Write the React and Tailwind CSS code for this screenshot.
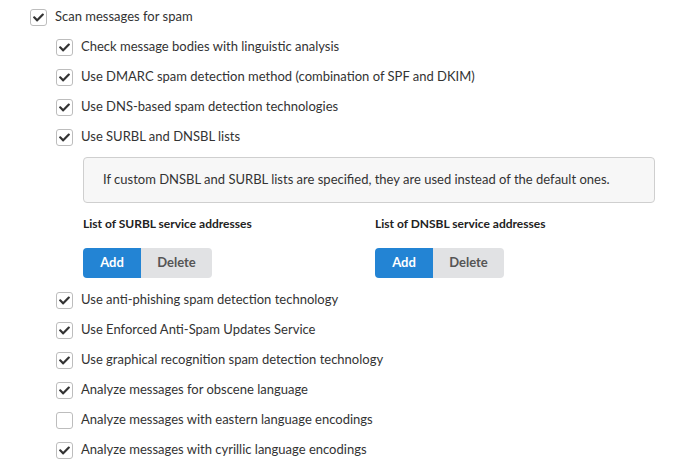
import React from 'react';

const Check = () => (
  <svg viewBox="0 0 512 512" className="w-[11px] h-[11px]" fill="#333">
    <path d="M173.9 439.4L7.5 273c-10-10-10-26.2 0-36.2l36.2-36.2c10-10 26.2-10 36.2 0L192 312.7 432.1 72.6c10-10 26.2-10 36.2 0l36.2 36.2c10 10 10 26.2 0 36.2L210.1 439.4c-10 10-26.2 10-36.2 0z" />
  </svg>
);

const Row = ({ checked = true, children }) => (
  <label className="flex items-center h-[30px] gap-[8px] text-[13px] text-[#333]">
    <span className="w-[17px] h-[17px] rounded-[3px] border border-[#bdbdbd] bg-white flex items-center justify-center shrink-0">
      {checked && <Check />}
    </span>
    <span>{children}</span>
  </label>
);

const ListBlock = ({ title }) => (
  <div className="w-[292px]">
    <div className="text-[12px] font-bold text-[#222] h-[20px] leading-[20px]">{title}</div>
    <div className="flex mt-[14px]">
      <button className="h-[30px] w-[58px] bg-[#2384d4] text-white font-bold text-[13px] rounded-l-[4px]">Add</button>
      <button className="h-[30px] w-[71px] bg-[#e1e2e4] text-[#555] font-bold text-[13px] rounded-r-[4px]">Delete</button>
    </div>
  </div>
);

export default function App() {
  return (
    <div className="bg-white w-[692px] h-[471px] overflow-hidden pl-[30px] pt-[2px]" style={{ fontFamily: 'Lato, "Liberation Sans", sans-serif' }}>
      <Row>Scan messages for spam</Row>
      <div className="pl-[26px]">
        <Row>Check message bodies with linguistic analysis</Row>
        <Row>Use DMARC spam detection method (combination of SPF and DKIM)</Row>
        <Row>Use DNS-based spam detection technologies</Row>
        <Row>Use SURBL and DNSBL lists</Row>
        <div className="pl-[27px] pt-[5px]">
          <div className="w-[572px] h-[46px] border border-[#cfcfcf] bg-[#f7f7f7] rounded-[4px] flex items-center pl-[19px] text-[13px] text-[#333]">
            If custom DNSBL and SURBL lists are specified, they are used instead of the default ones.
          </div>
          <div className="flex mt-[11px]">
            <ListBlock title="List of SURBL service addresses" />
            <ListBlock title="List of DNSBL service addresses" />
          </div>
        </div>
        <div className="pt-[7px]">
          <Row>Use anti-phishing spam detection technology</Row>
          <Row>Use Enforced Anti-Spam Updates Service</Row>
          <Row>Use graphical recognition spam detection technology</Row>
          <Row>Analyze messages for obscene language</Row>
          <Row checked={false}>Analyze messages with eastern language encodings</Row>
          <Row>Analyze messages with cyrillic language encodings</Row>
        </div>
      </div>
    </div>
  );
}
